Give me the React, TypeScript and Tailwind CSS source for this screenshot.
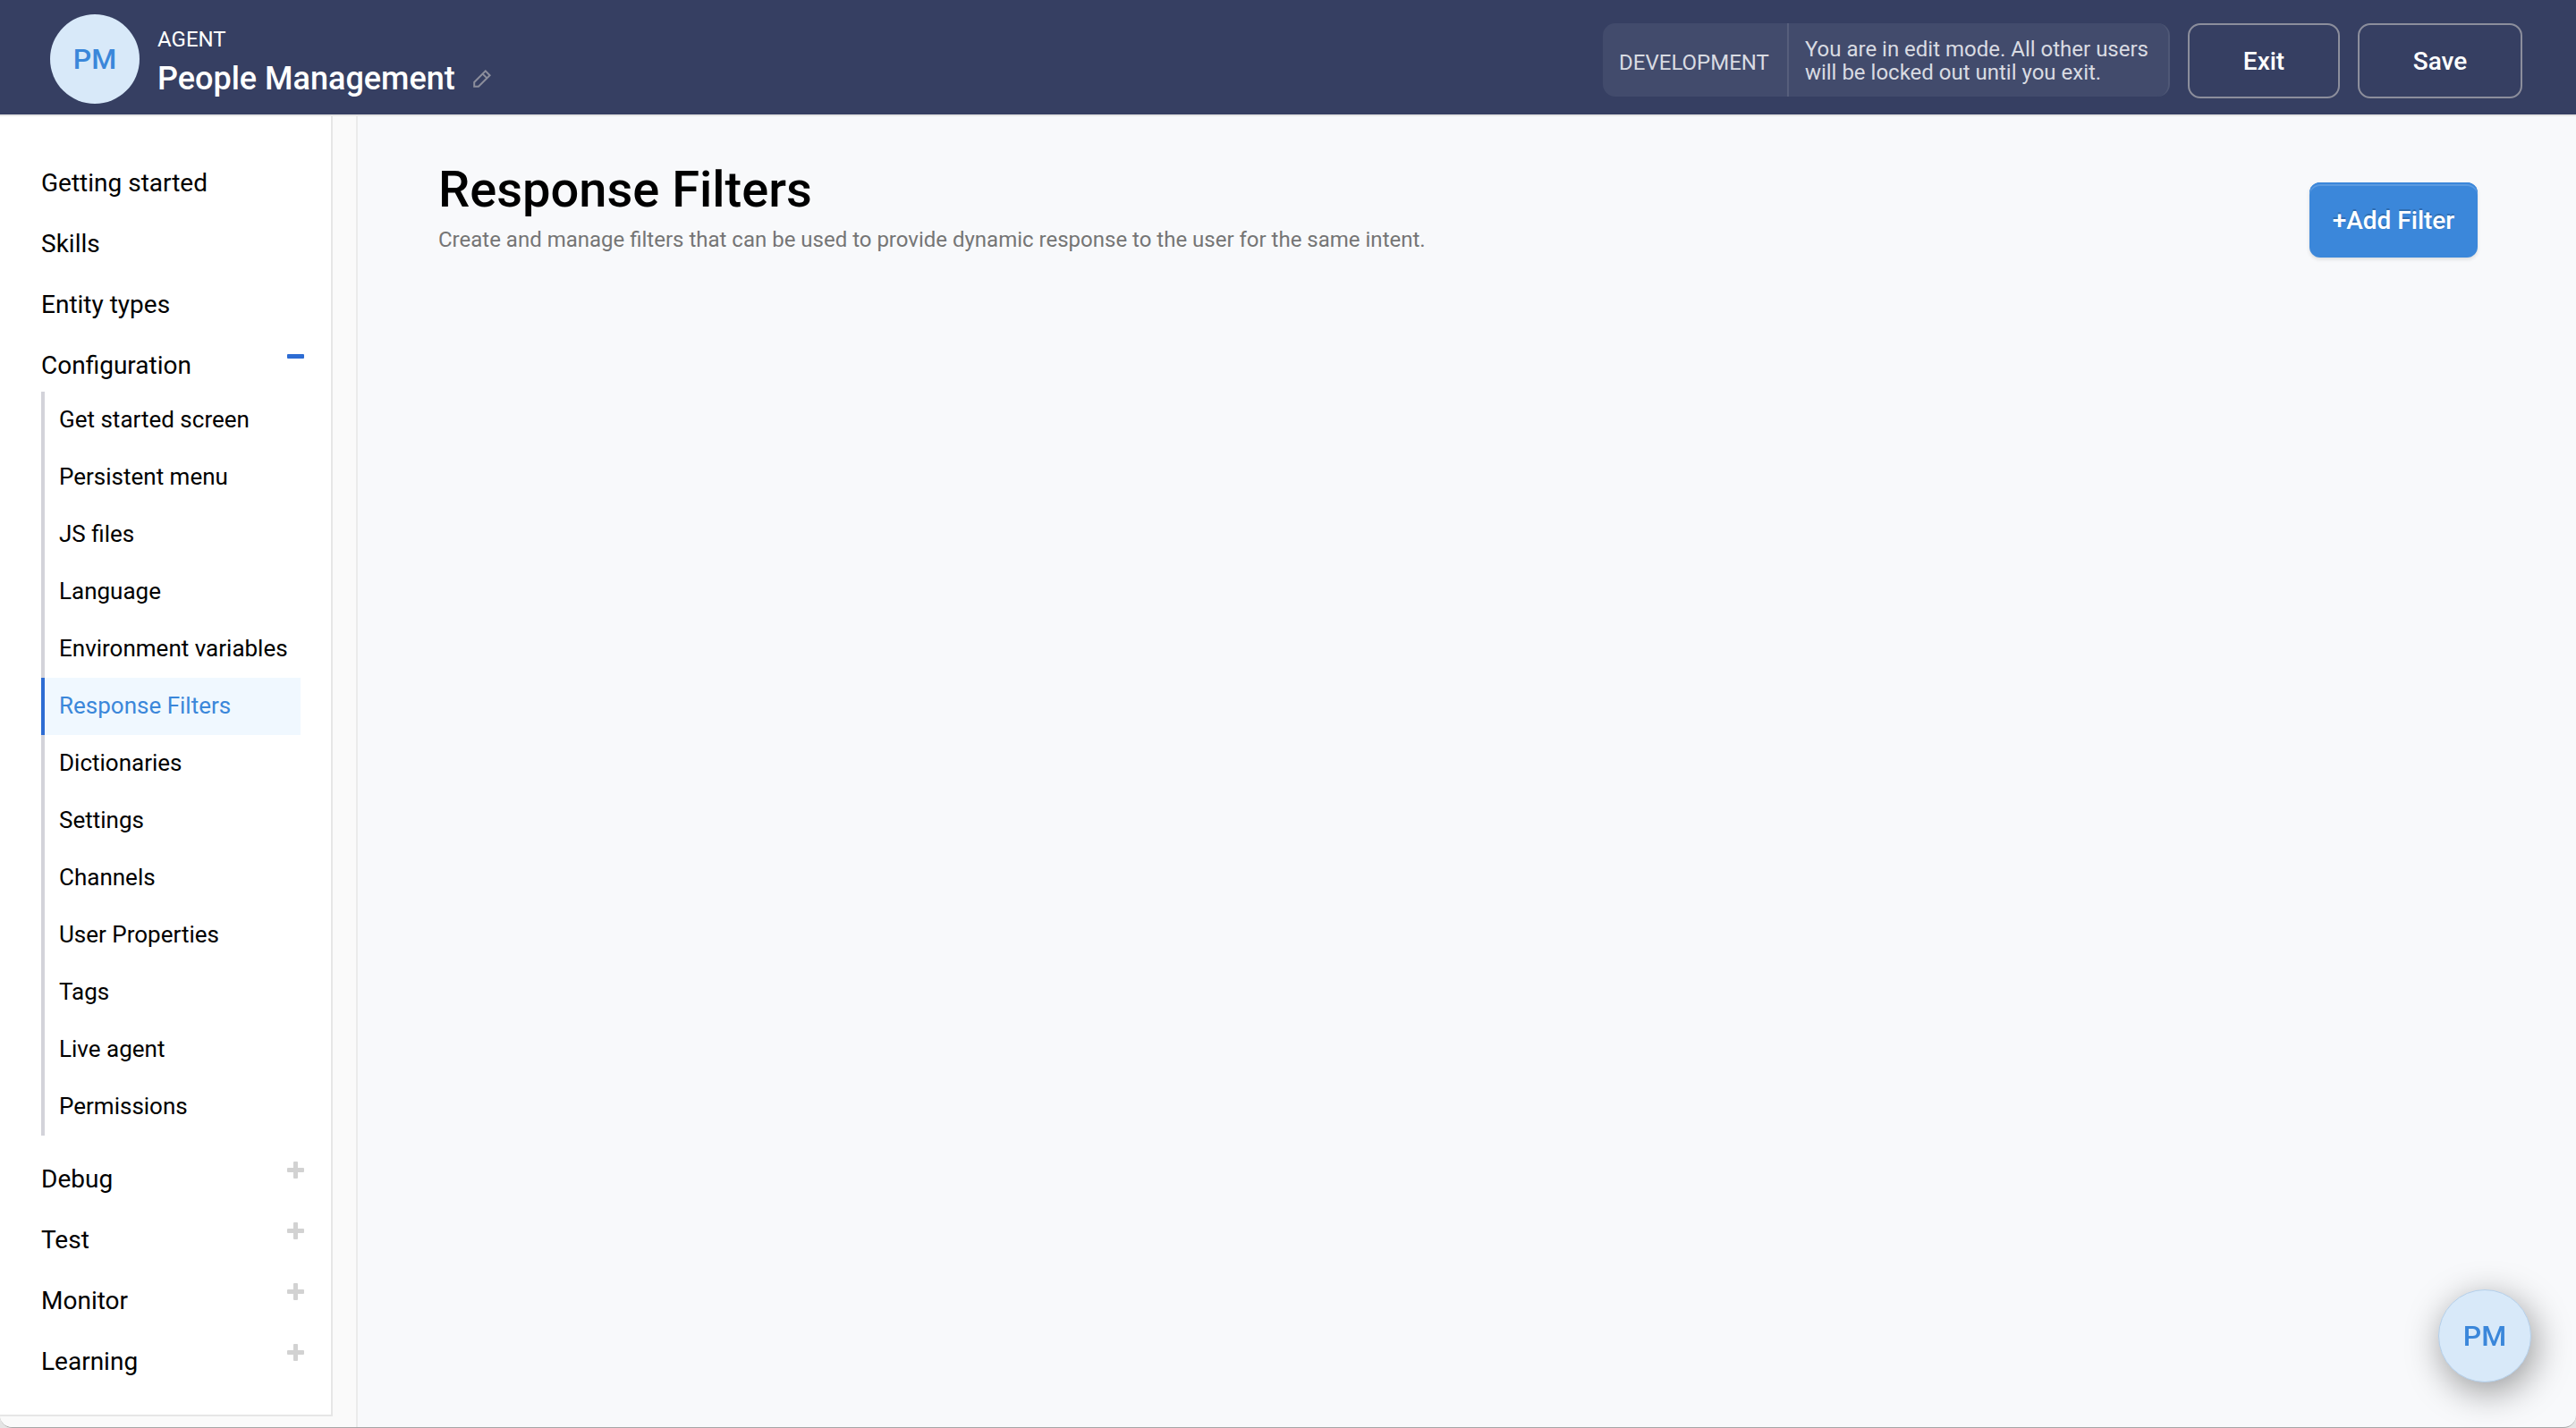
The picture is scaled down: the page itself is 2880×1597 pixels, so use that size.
import React from "react";

const topLinks = ["Getting started", "Skills", "Entity types"];

const configLinks = [
  "Get started screen",
  "Persistent menu",
  "JS files",
  "Language",
  "Environment variables",
  "Response Filters",
  "Dictionaries",
  "Settings",
  "Channels",
  "User Properties",
  "Tags",
  "Live agent",
  "Permissions",
];

const collapsedSections = ["Debug", "Test", "Monitor", "Learning"];

function PencilIcon() {
  return (
    <svg viewBox="0 0 20 20" className="h-5 w-5" fill="none" stroke="#8c8e9c" strokeWidth="2" aria-hidden="true">
      <path d="M1.2 18.8V14L13.8 1.4L18.6 6.2L6 18.8Z" />
      <path d="M10.6 4.6L15.4 9.4" />
    </svg>
  );
}

function ToggleIcon({ open }: { open: boolean }) {
  return (
    <svg viewBox="0 0 20 20" className="mt-2.5 h-5 w-5 shrink-0" fill={open ? "#2d6cd3" : "#d2d2d2"} aria-hidden="true">
      <rect x="1" y="8" width="19" height="5" rx="1" />
      {!open && <rect x="8" y="1" width="5" height="19" rx="1" />}
    </svg>
  );
}

function SectionButton({ label, open }: { label: string; open: boolean }) {
  return (
    <button type="button" aria-expanded={open} className="flex h-[60px] w-full items-start justify-between pr-[30px] text-left">
      <span className="leading-[62px]">{label}</span>
      <ToggleIcon open={open} />
    </button>
  );
}

function Header() {
  return (
    <header className="flex items-start justify-between border-b-2 border-[#e6e6e6] bg-[#363f62] pr-[60px] pl-14 text-white">
      <div className="flex items-start gap-5 pt-4 pb-3">
        <div className="flex size-[100px] items-center justify-center rounded-full bg-[#d8e9f9] text-[32px] font-medium text-[#3b87da]">
          PM
        </div>
        <div className="pt-3">
          <div className="text-2xl leading-8">AGENT</div>
          <div className="flex items-center gap-5">
            <span className="text-[36px] leading-[56px] font-medium">People Management</span>
            <button type="button" aria-label="Rename agent">
              <PencilIcon />
            </button>
          </div>
        </div>
      </div>
      <div className="flex items-start gap-5 pt-[26px]">
        <div className="flex h-[82px] items-stretch rounded-[14px] border-r-2 border-[#4f5876] bg-[#424b6c] text-2xl text-[#d9dbe2]">
          <span className="flex items-center border-r-2 border-[#565e7b] pt-1.5 pr-5 pl-[18px]">DEVELOPMENT</span>
          <p className="flex flex-col justify-center pt-0.5 pr-[22px] pl-[18px] leading-[26px]">
            <span>You are in edit mode. All other users</span>
            <span>will be locked out until you exit.</span>
          </p>
        </div>
        <button type="button" className="h-[84px] w-[170px] rounded-[14px] border-2 border-[#8c8e9c] pt-0.5 text-[28px] font-medium">
          Exit
        </button>
        <button type="button" className="h-[84px] w-[184px] rounded-[14px] border-2 border-[#8c8e9c] pt-0.5 text-[28px] font-medium">
          Save
        </button>
      </div>
    </header>
  );
}

function Sidebar() {
  return (
    <div className="shrink-0 border-r-2 border-[#ebebeb] bg-[#fafafa] pr-[26px] pb-3">
      <nav aria-label="Agent" className="flex w-[372px] flex-col gap-2 border-r-2 border-b-2 border-[#e6e6e6] bg-white pt-11 pb-[30px] pl-[46px] text-[28px] text-black">
        {topLinks.map((label) => (
          <a key={label} href="#" className="h-[60px] leading-[62px]">
            {label}
          </a>
        ))}
        <div className="pb-2.5">
          <SectionButton label="Configuration" open />
          <ul className="pr-[34px] text-[26px]">
            {configLinks.map((label) => (
              <li key={label}>
                <a
                  href="#"
                  aria-current={label === "Response Filters" ? "page" : undefined}
                  className={
                    label === "Response Filters"
                      ? "block h-16 border-l-4 border-[#2d6cd3] bg-[#f0f8ff] pl-4 leading-[62px] whitespace-nowrap text-[#3b87da]"
                      : "block h-16 border-l-4 border-[#d3d3da] pl-4 leading-[62px] whitespace-nowrap"
                  }
                >
                  {label}
                </a>
              </li>
            ))}
          </ul>
        </div>
        {collapsedSections.map((label) => (
          <SectionButton key={label} label={label} open={false} />
        ))}
      </nav>
    </div>
  );
}

export default function App() {
  return (
    <div className="min-h-screen bg-[#e4e4e4] font-[Roboto,sans-serif]">
      <div className="flex min-h-screen flex-col overflow-hidden rounded-b-[14px] border-b border-[#a6a6a6] bg-[#f8f9fb]">
        <Header />
        <div className="flex grow">
          <Sidebar />
          <main className="flex grow items-start justify-between pt-[42px] pr-[110px] pl-[90px]">
            <div>
              <h1 className="text-[56px] leading-[80px] font-medium text-black">Response Filters</h1>
              <p className="text-2xl leading-8 text-[#757575]">
                Create and manage filters that can be used to provide dynamic response to the user for the same intent.
              </p>
            </div>
            <button
              type="button"
              className="mt-8 h-[84px] w-[188px] rounded-xl bg-[#3b87da] pt-0.5 text-[28px] font-medium text-white shadow-[inset_0_2px_0_#3b87da,inset_0_4px_0_#5a9ae0,0_2px_4px_rgba(0,0,0,0.12)] text-shadow-[0_-2px_0_rgba(0,0,0,0.2)]"
            >
              +Add Filter
            </button>
          </main>
        </div>
      </div>
      <button
        type="button"
        aria-label="Open chat"
        className="fixed right-[50px] bottom-[51px] size-[104px] rounded-full border border-[#b4cfea] bg-[#d8e9f9] text-[32px] font-medium text-[#3b87da] shadow-[4px_10px_40px_rgba(0,0,0,0.4)]"
      >
        PM
      </button>
    </div>
  );
}
